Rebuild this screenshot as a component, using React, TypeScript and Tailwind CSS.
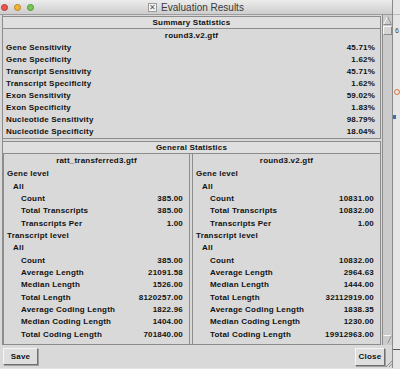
import React from "react";

type Row = { label: string; value?: string; indent: number };

const summary: [string, string][] = [
  ["Gene Sensitivity", "45.71%"],
  ["Gene Specificity", "1.62%"],
  ["Transcript Sensitivity", "45.71%"],
  ["Transcript Specificity", "1.62%"],
  ["Exon Sensitivity", "59.02%"],
  ["Exon Specificity", "1.83%"],
  ["Nucleotide Sensitivity", "98.79%"],
  ["Nucleotide Specificity", "18.04%"],
];

const leftRows: Row[] = [
  { label: "Gene level", indent: 0 },
  { label: "All", indent: 1 },
  { label: "Count", value: "385.00", indent: 2 },
  { label: "Total Transcripts", value: "385.00", indent: 2 },
  { label: "Transcripts Per", value: "1.00", indent: 2 },
  { label: "Transcript level", indent: 0 },
  { label: "All", indent: 1 },
  { label: "Count", value: "385.00", indent: 2 },
  { label: "Average Length", value: "21091.58", indent: 2 },
  { label: "Median Length", value: "1526.00", indent: 2 },
  { label: "Total Length", value: "8120257.00", indent: 2 },
  { label: "Average Coding Length", value: "1822.96", indent: 2 },
  { label: "Median Coding Length", value: "1404.00", indent: 2 },
  { label: "Total Coding Length", value: "701840.00", indent: 2 },
];

const rightRows: Row[] = [
  { label: "Gene level", indent: 0 },
  { label: "All", indent: 1 },
  { label: "Count", value: "10831.00", indent: 2 },
  { label: "Total Transcripts", value: "10832.00", indent: 2 },
  { label: "Transcripts Per", value: "1.00", indent: 2 },
  { label: "Transcript level", indent: 0 },
  { label: "All", indent: 1 },
  { label: "Count", value: "10832.00", indent: 2 },
  { label: "Average Length", value: "2964.63", indent: 2 },
  { label: "Median Length", value: "1444.00", indent: 2 },
  { label: "Total Length", value: "32112919.00", indent: 2 },
  { label: "Average Coding Length", value: "1838.35", indent: 2 },
  { label: "Median Coding Length", value: "1230.00", indent: 2 },
  { label: "Total Coding Length", value: "19912963.00", indent: 2 },
];

const indents = ["pl-[3px]", "pl-[9px]", "pl-[17px]"];

const StatColumn = ({ title, rows, className }: { title: string; rows: Row[]; className: string }) => (
  <div className={`flex flex-col ${className}`}>
    <div className="flex h-[14px] items-center justify-center">{title}</div>
    {rows.map((r, i) => (
      <div key={i} className={`flex h-[12.35px] items-center justify-between pr-[6px] ${indents[r.indent]}`}>
        <span>{r.label}</span>
        {r.value && <span>{r.value}</span>}
      </div>
    ))}
  </div>
);

const Arrow = ({ down }: { down?: boolean }) => (
  <svg width="9" height="9" viewBox="0 0 9 9" className="block">
    {down ? (
      <>
        <polyline points="0.5,0.5 8.5,0.5 4.5,8.5" fill="none" stroke="#f7f7f7" strokeWidth="1" />
        <line x1="8.5" y1="0.5" x2="4.5" y2="8.5" stroke="#8a8a8a" strokeWidth="1" />
      </>
    ) : (
      <>
        <polyline points="0.5,8.5 4.5,0.5 8.5,8.5" fill="none" stroke="#f7f7f7" strokeWidth="1" />
        <polyline points="4.5,0.5 8.5,8.5 0.5,8.5" fill="none" stroke="#8a8a8a" strokeWidth="1" />
      </>
    )}
  </svg>
);

export default function App() {
  return (
    <div className="flex h-[369px] w-[400px] overflow-hidden bg-[#e4e4e4] font-['Liberation_Sans',Arial,sans-serif] text-[#111]">
      <div className="flex h-[368px] w-[395px] flex-col border-r border-[#8a8a8a]">
        {/* title bar */}
        <div className="grid h-[15px] shrink-0 grid-cols-[1fr_auto_1fr] items-center border-b border-[#9c9c9c] bg-gradient-to-b from-[#ececec] to-[#cdcdcd]">
          <div className="flex items-center gap-[6px] pl-[1px]">
            <span className="h-[7px] w-[7px] rounded-full border border-[#b33a33] bg-[#f0554c]" />
            <span className="h-[7px] w-[7px] rounded-full border border-[#b5811d] bg-[#f3b634]" />
            <span className="h-[7px] w-[7px] rounded-full border border-[#4d9a2c] bg-[#79c753]" />
          </div>
          <div className="flex items-center gap-[4px] text-[10px] text-[#3a3a3a]">
            <span className="flex h-[9px] w-[9px] items-center justify-center border border-[#9a9a9a] bg-[#f4f4f4] text-[8px] leading-none text-[#555]">
              ✕
            </span>
            <span>Evaluation Results</span>
          </div>
          <div />
        </div>

        <div className="flex flex-1 flex-col bg-[#d9d9d9] text-[8px] font-bold tracking-[0.2px]">
          <div className="flex h-[330px] pl-[2px]">
            {/* scroll content */}
            <div className="flex flex-1 flex-col border-l border-[#8c8c8c] pr-[1px] pt-[1px]">
              <div className="flex flex-col border border-l-0 border-[#8c8c8c]">
                <div className="flex h-[12px] items-center justify-center border-b border-[#8c8c8c] bg-[#dfdfdf]">
                  Summary Statistics
                </div>
                <div className="flex flex-col">
                  <div className="flex h-[13px] items-center justify-center">round3.v2.gtf</div>
                  {summary.map(([l, v]) => (
                    <div key={l} className="flex h-[12px] items-center justify-between pl-[3px] pr-[5px]">
                      <span>{l}</span>
                      <span>{v}</span>
                    </div>
                  ))}
                </div>
              </div>

              <div className="mt-[2px] flex flex-1 flex-col border border-b-0 border-l-0 border-[#8c8c8c]">
                <div className="flex h-[12px] items-center justify-center border-b border-[#8c8c8c] bg-[#dfdfdf]">
                  General Statistics
                </div>
                <div className="flex flex-1 gap-[2px] border-b border-[#8c8c8c]">
                  <StatColumn title="ratt_transferred3.gtf" rows={leftRows} className="w-[187px] border-x border-[#8c8c8c]" />
                  <StatColumn title="round3.v2.gtf" rows={rightRows} className="flex-1 border-l border-[#8c8c8c]" />
                </div>
              </div>
            </div>

            {/* scrollbar */}
            <div className="flex w-[10px] flex-col items-center border-l border-[#8c8c8c] bg-[#cbcbcb] pt-[1px] pb-[1px]">
              <Arrow />
              <div className="mt-[1px] h-[9px] w-[9px] border border-b-[#8a8a8a] border-l-[#f7f7f7] border-r-[#8a8a8a] border-t-[#f7f7f7] bg-[#d6d6d6]" />
              <div className="flex-1" />
              <Arrow down />
            </div>
          </div>

          {/* button bar */}
          <div className="flex flex-1 items-start justify-between pl-[3px] pt-[3px]">
            <button className="flex h-[17px] w-[35px] items-center justify-center border border-b-[#6f6f6f] border-l-[#f5f5f5] border-r-[#6f6f6f] border-t-[#f5f5f5] bg-[#dedede] text-[8px] font-bold shadow-[1px_1px_0_#a0a0a0]">
              Save
            </button>
            <div className="flex h-full items-start">
              <button className="flex h-[18px] w-[30px] items-center justify-center border border-b-[#6f6f6f] border-l-[#f5f5f5] border-r-[#6f6f6f] border-t-[#f5f5f5] bg-[#dedede] text-[8px] font-bold shadow-[1px_1px_0_#a0a0a0]">
                Close
              </button>
              <svg width="7" height="7" viewBox="0 0 7 7" className="mt-[12px] block">
                <line x1="1" y1="7" x2="7" y2="1" stroke="#8a8a8a" />
                <line x1="4" y1="7" x2="7" y2="4" stroke="#8a8a8a" />
              </svg>
            </div>
          </div>
        </div>
      </div>

      {/* desktop edge */}
      <div className="flex flex-1 flex-col bg-[#e6e6e6]">
        <div className="h-[15px] border-b border-[#bdbdbd]" />
        <div className="mt-[12px] ml-[2px] text-[7px] leading-none text-[#444]">6</div>
        <div className="mt-[55px] ml-[1px] h-[6px] w-[6px] rounded-full border border-[#d7753a]" />
        <div className="mt-[20px] h-[4px] w-[3px] bg-[#3b6fb5]" />
        <div className="mt-[230px] h-px bg-[#555]" />
      </div>
    </div>
  );
}
